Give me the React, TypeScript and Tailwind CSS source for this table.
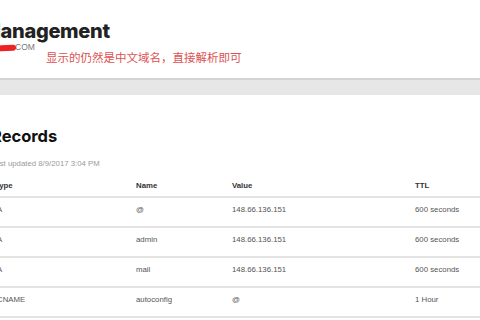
const records = [
  { type: "A", name: "@", value: "148.66.136.151", ttl: "600 seconds" },
  { type: "A", name: "admin", value: "148.66.136.151", ttl: "600 seconds" },
  { type: "A", name: "mail", value: "148.66.136.151", ttl: "600 seconds" },
  { type: "CNAME", name: "autoconfig", value: "@", ttl: "1 Hour" },
];

const App = () => {
  return (
    <div className="w-[480px] h-[320px] overflow-hidden bg-white font-['Liberation_Sans',Arial,sans-serif]">
      {/* Page header */}
      <div className="h-[78px] -ml-[18px] pt-[20px]">
        <h1 className="font-['Inter',sans-serif] font-extrabold text-[20px] leading-[22px] tracking-[-0.3px] text-[#222]">
          Management
        </h1>
        <div className="flex items-center h-[9px] mt-[1px]">
          <span className="ml-[16px] w-[18px] h-[6px] rounded-full bg-[#ee2222] -rotate-3"></span>
          <span className="-ml-[1px] text-[8.5px] leading-[9px] text-[#777]">COM</span>
        </div>
        <p className="ml-[64px] -mt-[2px] text-[11.5px] leading-[14px] text-[#dc5252] font-['Noto_Sans_CJK_SC',sans-serif]">
          显示的仍然是中文域名，直接解析即可
        </p>
      </div>

      {/* Grey strip */}
      <div className="h-[17px] border-t-[2px] border-[#d4d4d4] bg-[#e7e7e7]"></div>

      {/* Records */}
      <div className="-ml-[9px] pt-[31px]">
        <h2 className="font-['Inter',sans-serif] font-bold text-[16.5px] leading-[20px] text-[#111]">
          Records
        </h2>
        <p className="mt-[13px] text-[7.8px] leading-[10px] text-[#9a9a9a]">
          Last updated 8/9/2017 3:04 PM
        </p>
      </div>

      <div className="mt-[12px]">
        <div className="grid grid-cols-[136px_96px_183px_1fr] h-[17px] border-b-[2px] border-[#e3e3e3] text-[7.8px] leading-[10px] font-bold text-[#333]">
          <span className="-ml-[5px]">Type</span>
          <span>Name</span>
          <span>Value</span>
          <span>TTL</span>
        </div>
        {records.map((r, i) => (
          <div
            key={i}
            className="grid grid-cols-[136px_96px_183px_1fr] h-[30px] pt-[7px] border-b-[2px] border-[#e3e3e3] text-[7.8px] leading-[10px] text-[#555]"
          >
            <span className="-ml-[3px]">{r.type}</span>
            <span>{r.name}</span>
            <span>{r.value}</span>
            <span>{r.ttl}</span>
          </div>
        ))}
      </div>
    </div>
  );
};

export default App;
